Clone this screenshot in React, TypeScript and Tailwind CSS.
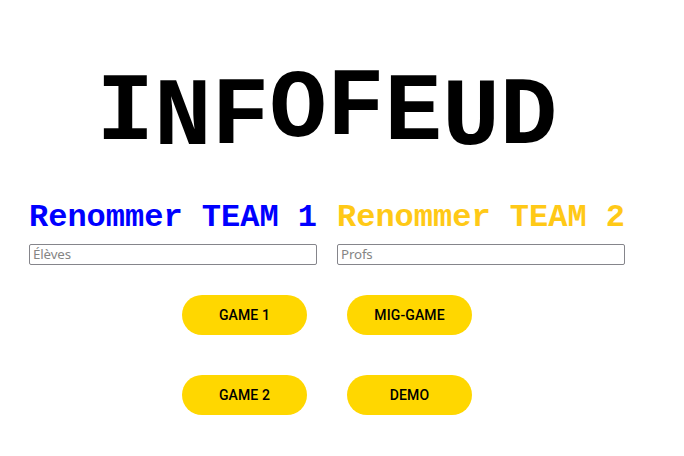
const letters: { char: string; shift: string }[] = [
  { char: "I", shift: "translate-y-[-1px]" },
  { char: "N", shift: "translate-y-[4px]" },
  { char: "F", shift: "translate-y-[2.5px]" },
  { char: "O", shift: "translate-y-[-4px]" },
  { char: "F", shift: "translate-y-[-6px]" },
  { char: "E", shift: "translate-y-[-1px]" },
  { char: "U", shift: "translate-y-[4px]" },
  { char: "D", shift: "translate-y-[2.5px]" },
];

function Team({ title, color, placeholder }: { title: string; color: string; placeholder: string }) {
  return (
    <label className="flex w-[288px] flex-col">
      <span className={`whitespace-nowrap font-['Liberation_Mono',monospace] text-[32px] leading-9 font-bold ${color}`}>
        {title}
      </span>
      <input
        placeholder={placeholder}
        className="mt-2 h-[21px] w-full rounded-[2px] border border-[#85858b] bg-white px-[3px] pb-[2px] font-['Noto_Sans',sans-serif] text-[13.333px] tracking-[-0.15px] text-black placeholder:text-[#858585]"
      />
    </label>
  );
}

function GameButton({ label }: { label: string }) {
  return (
    <button className="h-10 w-[125px] rounded-full bg-[#ffd700] font-[Roboto,sans-serif] text-sm font-medium tracking-[0.12px] text-black">
      {label}
    </button>
  );
}

export default function App() {
  return (
    <main className="flex h-[456px] w-[684px] flex-col overflow-hidden bg-white">
      <h1 className="mt-[58px] ml-[96.5px] flex h-[114px] font-['Liberation_Mono',monospace] text-[96px] leading-[114px] font-bold text-black">
        {letters.map(({ char, shift }, i) => (
          <span key={i} className={`inline-block ${shift}`}>
            {char}
          </span>
        ))}
      </h1>
      <section className="mt-7 ml-[29px] flex gap-5">
        <Team title="Renommer TEAM 1" color="text-[#0000ff]" placeholder="Élèves" />
        <Team title="Renommer TEAM 2" color="text-[#ffc917]" placeholder="Profs" />
      </section>
      <section className="mt-[30px] ml-[182px] grid w-[290px] grid-cols-2 gap-10">
        <GameButton label="GAME 1" />
        <GameButton label="MIG-GAME" />
        <GameButton label="GAME 2" />
        <GameButton label="DEMO" />
      </section>
    </main>
  );
}
